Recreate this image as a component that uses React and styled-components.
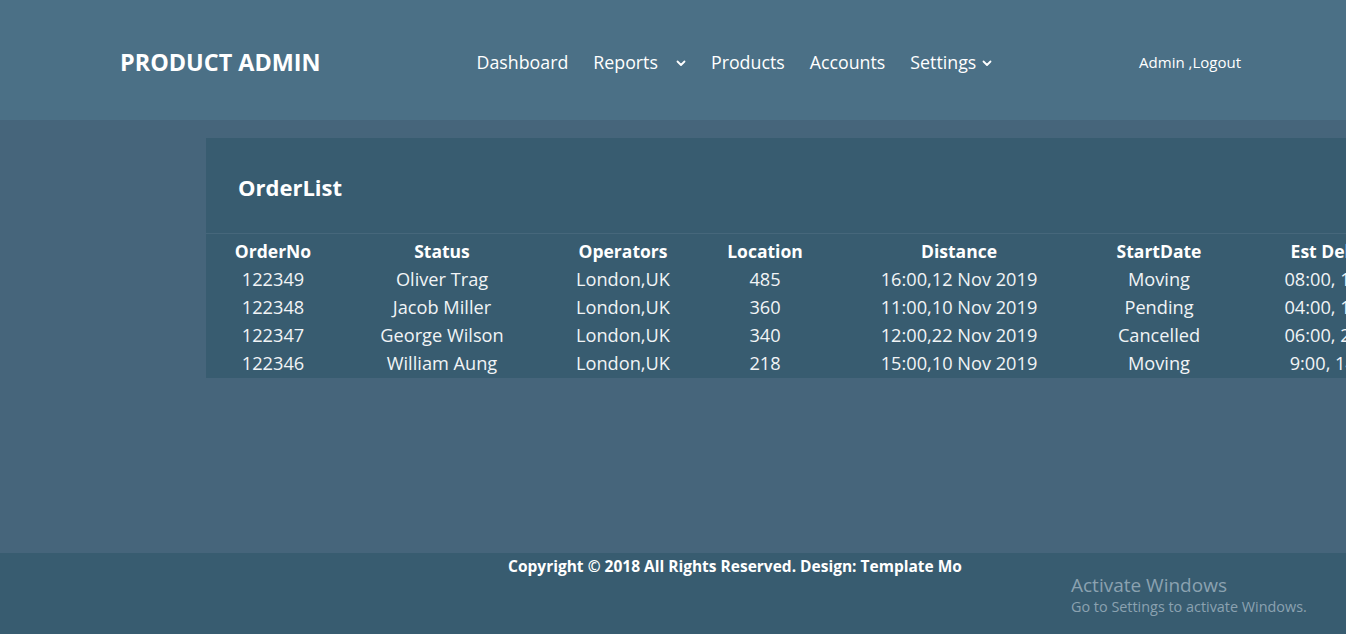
import styled, { createGlobalStyle } from 'styled-components';

const GlobalStyle = createGlobalStyle`
  html, body {
    margin: 0;
    padding: 0;
    overflow: hidden;
  }
  body {
    font-family: 'Open Sans', 'Noto Sans', sans-serif;
    color: #fff;
    background: #46657b;
  }
`;

const columns = [
  { key: 'no', title: 'OrderNo', width: 132 },
  { key: 'name', title: 'Status', width: 206 },
  { key: 'op', title: 'Operators', width: 156 },
  { key: 'loc', title: 'Location', width: 128 },
  { key: 'dist', title: 'Distance', width: 260 },
  { key: 'start', title: 'StartDate', width: 140 },
  { key: 'est', title: 'Est Delivery', width: 226 },
];

const orders = [
  { no: '122349', name: 'Oliver Trag', op: 'London,UK', loc: '485', dist: '16:00,12 Nov 2019', start: 'Moving', est: '08:00, 18 Nov' },
  { no: '122348', name: 'Jacob Miller', op: 'London,UK', loc: '360', dist: '11:00,10 Nov 2019', start: 'Pending', est: '04:00, 14 Nov' },
  { no: '122347', name: 'George Wilson', op: 'London,UK', loc: '340', dist: '12:00,22 Nov 2019', start: 'Cancelled', est: '06:00, 28 Nov' },
  { no: '122346', name: 'William Aung', op: 'London,UK', loc: '218', dist: '15:00,10 Nov 2019', start: 'Moving', est: '9:00, 14 Nov' },
];

const gridTemplate = columns.map(c => `${c.width}px`).join(' ');

function Chevron() {
  return (
    <svg width="10" height="7" viewBox="0 0 10 7" fill="none">
      <path d="M1.5 1.5 L5 5 L8.5 1.5" stroke="#fff" strokeWidth="1.8" strokeLinecap="round" strokeLinejoin="round" />
    </svg>
  );
}

export default function App() {
  return (
    <Page>
      <GlobalStyle />
      <Header>
        <Logo>PRODUCT ADMIN</Logo>
        <Nav>
          <NavItem>Dashboard</NavItem>
          <NavItem $chevronGap={18}>
            Reports <Chevron />
          </NavItem>
          <NavItem>Products</NavItem>
          <NavItem>Accounts</NavItem>
          <NavItem $chevronGap={6}>
            Settings <Chevron />
          </NavItem>
        </Nav>
        <UserLink>Admin ,Logout</UserLink>
      </Header>

      <Main>
        <Card>
          <CardTitle>OrderList</CardTitle>
          <Table>
            <Row $head>
              {columns.map(c => (
                <Cell key={c.key}>{c.title}</Cell>
              ))}
            </Row>
            {orders.map(o => (
              <Row key={o.no}>
                {columns.map(c => (
                  <Cell key={c.key}>{o[c.key]}</Cell>
                ))}
              </Row>
            ))}
          </Table>
        </Card>
      </Main>

      <Footer>Copyright © 2018 All Rights Reserved. Design: Template Mo</Footer>

      <Watermark>
        <WatermarkTitle>Activate Windows</WatermarkTitle>
        <WatermarkText>Go to Settings to activate Windows.</WatermarkText>
      </Watermark>
    </Page>
  );
}

const Page = styled.div`
  position: relative;
  display: flex;
  flex-direction: column;
  min-height: 634px;
  width: 1346px;
`;

const Header = styled.header`
  display: flex;
  align-items: center;
  height: 120px;
  padding: 3px 105px 0 120px;
  background: #4b7086;
  box-sizing: border-box;
`;

const Logo = styled.div`
  font-size: 23.4px;
  font-weight: 700;
`;

const Nav = styled.nav`
  display: flex;
  align-items: center;
  gap: 25px;
  margin-left: 156px;
  margin-top: 1px;
`;

const NavItem = styled.a`
  display: flex;
  align-items: center;
  gap: ${p => p.$chevronGap || 0}px;
  font-size: 17.8px;
  color: #fff;
  cursor: pointer;
  svg {
    margin-top: 3px;
  }
`;

const UserLink = styled.a`
  margin-left: auto;
  font-size: 15px;
  color: #fff;
  cursor: pointer;
`;

const Main = styled.main`
  flex: 1;
  padding: 18px 0 0 206px;
  background: #46657b;
  overflow: hidden;
`;

const Card = styled.section`
  width: 1300px;
  height: 240px;
  background: #385c70;
`;

const CardTitle = styled.h2`
  margin: 0;
  height: 96px;
  padding: 3px 0 0 32px;
  display: flex;
  align-items: center;
  font-size: 22px;
  font-weight: 700;
  border-bottom: 1px solid #46677b;
  box-sizing: border-box;
`;

const Table = styled.div`
  padding-top: 3px;
  margin-left: 1px;
`;

const Row = styled.div`
  display: grid;
  grid-template-columns: ${gridTemplate};
  height: 28px;
  align-items: center;
  font-size: ${p => (p.$head ? 17.5 : 18.2)}px;
  font-weight: ${p => (p.$head ? 700 : 400)};
  color: ${p => (p.$head ? '#fff' : '#f1f4f6')};
`;

const Cell = styled.div`
  text-align: center;
  white-space: pre;
`;

const Footer = styled.footer`
  height: 81px;
  padding: 2px 0 0 124px;
  box-sizing: border-box;
  background: #385c70;
  text-align: center;
  font-size: 15.5px;
  font-weight: 700;
`;

const Watermark = styled.div`
  position: absolute;
  left: 1071px;
  top: 573px;
  color: #8ba2b0;
`;

const WatermarkTitle = styled.div`
  font-size: 19px;
  line-height: 24px;
`;

const WatermarkText = styled.div`
  font-size: 14.4px;
  line-height: 20px;
`;
